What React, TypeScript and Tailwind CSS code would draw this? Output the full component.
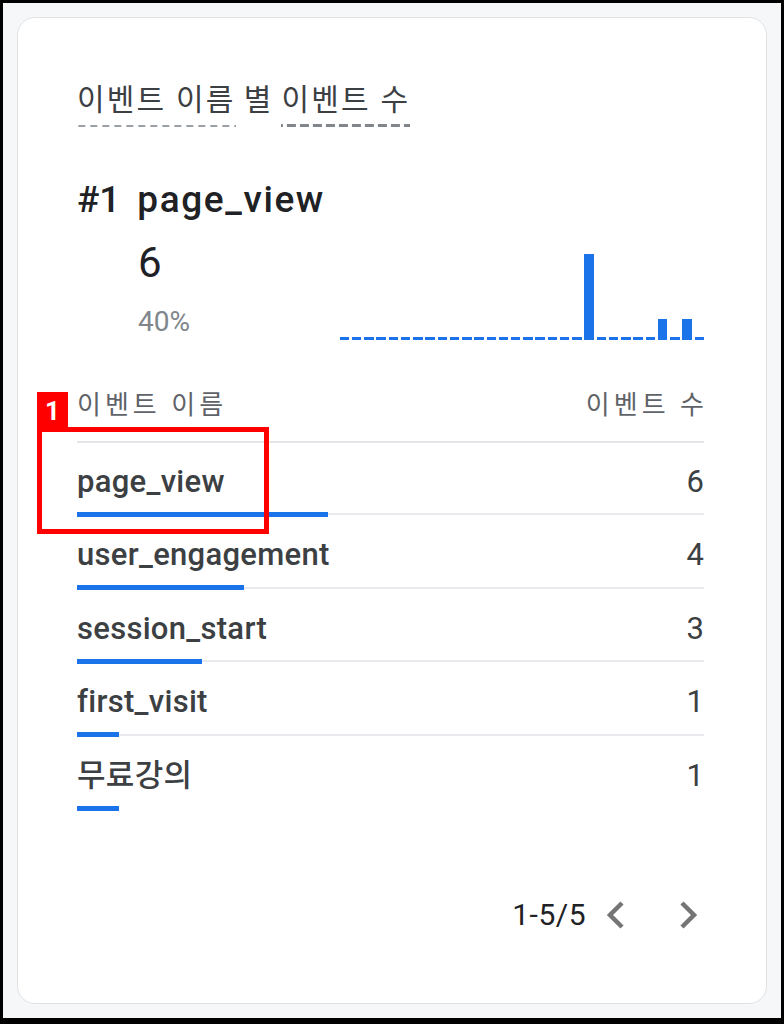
const chart = [
  0, 0, 0, 0, 0, 0, 0, 0, 0, 0, 0, 0, 0, 0, 0, 0, 0, 0, 0, 0, 4, 0, 0, 0, 0, 0, 1, 0, 1, 0,
];

const rows = [
  { name: 'page_view', count: 6 },
  { name: 'user_engagement', count: 4 },
  { name: 'session_start', count: 3 },
  { name: 'first_visit', count: 1 },
  { name: '무료강의', count: 1 },
];

const total = rows.reduce((sum, r) => sum + r.count, 0);

const ChevronLeft = () => (
  <svg width="20" height="30" viewBox="0 0 20 30" fill="none">
    <path d="M17 3 L5 15 L17 27" stroke="#757575" strokeWidth="4.5" strokeLinejoin="miter" />
  </svg>
);

const ChevronRight = () => (
  <svg width="20" height="30" viewBox="0 0 20 30" fill="none">
    <path d="M3 3 L15 15 L3 27" stroke="#757575" strokeWidth="4.5" strokeLinejoin="miter" />
  </svg>
);

const App = () => {
  return (
    <div className="relative w-[784px] h-[1024px] border-[3px] border-b-[6px] border-black bg-[#f6f7f8] p-[14px] font-['Roboto','Noto_Sans_CJK_KR',sans-serif]">
      <div className="h-full rounded-[18px] border border-[#dfe1e5] bg-white pl-[59px] pr-[62px] pt-[64px]">
        {/* title */}
        <div className="flex items-start gap-[8px] text-[30px] leading-[36px] tracking-[2.2px] text-[#3c4043]">
          <span className="inline-block pb-[9px] bg-[linear-gradient(to_right,#9aa0a6_62%,transparent_62%)] bg-[length:12px_2px] bg-bottom bg-repeat-x">
            이벤트 이름
          </span>
          <span>별</span>
          <span className="inline-block pb-[9px] bg-[linear-gradient(to_right,#80868b_70%,transparent_70%)] bg-[length:13px_3px] bg-bottom bg-repeat-x">
            이벤트 수
          </span>
        </div>

        {/* top item */}
        <div className="mt-[51px] flex text-[37px] leading-[44px] font-medium text-[#202124]">
          <span>#1</span>
          <span className="ml-[17px] tracking-[1.6px]">page_view</span>
        </div>

        <div className="flex items-start">
          <div className="pl-[61px] flex flex-col">
            <span className="mt-[17px] text-[42px] leading-[48px] text-[#202124]">6</span>
            <span className="mt-[19px] text-[28px] leading-[32px] text-[#80868b]">40%</span>
          </div>
          <div className="ml-auto mt-[32px] h-[86px] flex items-end gap-[2.74px]">
            {chart.map((v, i) => (
              <div
                key={i}
                className="w-[9.5px] bg-[#1a73e8]"
                style={{ height: v === 0 ? 3 : (v / 4) * 86 }}
              />
            ))}
          </div>
        </div>

        {/* table */}
        <div className="mt-[49px] flex justify-between pb-[20px] border-b-2 border-[#e3e5e8] text-[26px] leading-[32px] tracking-[4px] text-[#5f6368]">
          <span>이벤트 이름</span>
          <span className="-mr-[4px]">이벤트 수</span>
        </div>

        {rows.map((row, i) => (
          <div key={row.name} className="pt-[20.5px]">
            <div className="flex justify-between text-[31px] leading-[36px] text-[#3c4043]">
              <span className="font-medium tracking-[0.3px]">{row.name}</span>
              <span>{row.count}</span>
            </div>
            <div className="mt-[12px] h-[5px] flex items-center">
              <div className="h-full bg-[#1a73e8]" style={{ width: `${(row.count / total) * 100}%` }} />
              {i < rows.length - 1 && <div className="flex-1 h-[2px] bg-[#e8eaed]" />}
            </div>
          </div>
        ))}

        {/* pagination */}
        <div className="mt-[86px] flex justify-end items-center text-[30px] leading-[36px] text-[#202124]">
          <span className="tracking-[0.5px]">1-5/5</span>
          <span className="ml-[19px]">
            <ChevronLeft />
          </span>
          <span className="ml-[54px] mr-[5px]">
            <ChevronRight />
          </span>
        </div>
      </div>

      {/* annotation */}
      <div className="absolute left-[34px] top-[424px] w-[232px] h-[107px] border-[5px] border-[#ff0000]" />
      <div className="absolute left-[34px] top-[389px] w-[31px] h-[38px] bg-[#ff0000] flex items-center justify-center text-white text-[26px] font-bold leading-none">
        1
      </div>
    </div>
  );
};

export default App;
